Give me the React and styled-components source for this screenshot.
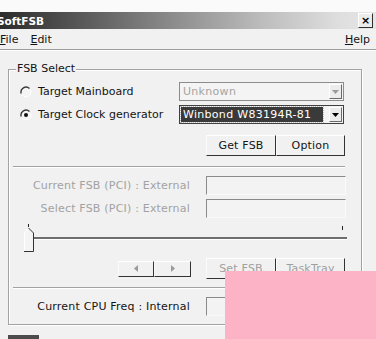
import React from "react";
import styled, { createGlobalStyle } from "styled-components";

const Global = createGlobalStyle`
  html, body { margin: 0; padding: 0; background: #f1f1f1; }
  body { font-family: "DejaVu Sans", Verdana, sans-serif; }
`;

const Page = styled.div`
  position: relative;
  width: 376px;
  height: 339px;
  overflow: hidden;
  background: #f1f1f1;
  font-family: "DejaVu Sans", Verdana, sans-serif;
  font-size: 11px;
  color: #141414;
`;

const TopGap = styled.div`
  height: 12px;
  background: #fafafa;
`;

const TitleBar = styled.div`
  height: 17px;
  display: flex;
  align-items: center;
  justify-content: space-between;
  background: linear-gradient(to right, #2c2c2c 0%, #555 20%, #8a8a8a 45%, #bdbdbd 70%, #dedede 90%, #e6e6e6 100%);
`;

const Title = styled.span`
  margin-left: -3px;
  font-weight: bold;
  font-size: 10.5px;
  color: #fff;
`;

const CloseBtn = styled.div`
  width: 13px;
  height: 13px;
  margin-right: 3px;
  display: flex;
  align-items: center;
  justify-content: center;
  background: #ececec;
  border-top: 1px solid #fff;
  border-left: 1px solid #fff;
  border-right: 1px solid #303030;
  border-bottom: 1px solid #303030;
  font-weight: bold;
  font-size: 11px;
  line-height: 1;
  color: #000;
`;

const MenuBar = styled.div`
  height: 19px;
  display: flex;
  align-items: center;
  padding: 1px 6px 0 0;
  border-bottom: 1px solid #9e9e9e;
  box-shadow: 0 1px 0 #fff;
`;

const MenuItem = styled.span`
  margin-left: ${(p) => p.$ml || 0}px;
  u { text-decoration: underline; text-underline-offset: 1px; }
`;

const Spacer = styled.div`
  flex: 1;
`;

const Body = styled.div`
  padding: 19px 0 0 8px;
`;

const Group = styled.div`
  position: relative;
  box-sizing: content-box;
  width: 334px;
  height: 254px;
  padding: 0 14px 0 4px;
  border: 1px solid #a2a2a2;
  box-shadow: inset 1px 1px 0 #fff, 1px 1px 0 #fff;
`;

const Legend = styled.span`
  position: absolute;
  top: -8px;
  left: 7px;
  padding: 0 1px;
  background: #f1f1f1;
  font-size: 11px;
`;

const Row = styled.div`
  display: flex;
  align-items: center;
  height: ${(p) => p.$h}px;
  margin-top: ${(p) => p.$mt}px;
`;

const RadioWrap = styled.span`
  display: flex;
  margin-left: 7px;
  width: 12px;
  height: 12px;
`;

const RadioLabel = styled.span`
  margin-left: 6px;
  flex: 1;
`;

const Combo = styled.div`
  width: 161px;
  height: 17px;
  margin-right: 3px;
  display: flex;
  align-items: center;
  border: 1px solid ${(p) => (p.$active ? "#404040" : "#8c8c8c")};
  background: #f4f4f4;
  padding: 0 1px;
`;

const ComboText = styled.span`
  flex: 1;
  height: 15px;
  display: flex;
  align-items: center;
  padding-left: 2px;
  margin-right: 6px;
  background: ${(p) => (p.$active ? "#3a3a3a" : "transparent")};
  outline: ${(p) => (p.$active ? "1px dotted #bbb" : "none")};
  color: ${(p) => (p.$active ? "#fff" : "#a4a4a4")};
  letter-spacing: 0.3px;
`;

const ComboArrow = styled.span`
  width: 11px;
  height: 13px;
  display: flex;
  align-items: center;
  justify-content: center;
  background: #ececec;
  border-top: 1px solid #fff;
  border-left: 1px solid #fff;
  border-right: 1px solid #6a6a6a;
  border-bottom: 1px solid #6a6a6a;
`;

const ButtonGroup = styled.div`
  display: flex;
  margin-left: ${(p) => p.$ml || 0}px;
  margin-right: ${(p) => p.$mr || 0}px;
`;

const Button = styled.div`
  width: ${(p) => p.$w}px;
  height: ${(p) => p.$h || 19}px;
  display: flex;
  align-items: center;
  justify-content: center;
  background: #f1f1f1;
  border-top: 1px solid #fff;
  border-left: 1px solid #fafafa;
  border-right: 1px solid #333;
  border-bottom: 1px solid #333;
  color: ${(p) => (p.$disabled ? "#a0a0a0" : "#141414")};
  letter-spacing: 0.2px;
`;

const Separator = styled.div`
  margin-top: ${(p) => p.$mt}px;
  margin-right: 2px;
  height: 1px;
  background: #a2a2a2;
  box-shadow: 0 1px 0 #fff;
`;

const FieldLabel = styled.span`
  width: 177px;
  text-align: right;
  color: ${(p) => (p.$disabled ? "#a2a2a2" : "#141414")};
  letter-spacing: 0.2px;
`;

const Field = styled.div`
  width: 138px;
  height: 17px;
  margin-left: 16px;
  border-top: 1px solid #8a8a8a;
  border-left: 1px solid #8a8a8a;
  border-right: 1px solid #fafafa;
  border-bottom: 1px solid #fafafa;
  background: #f3f3f3;
`;

const SliderRow = styled.div`
  position: relative;
  height: 27px;
  margin-top: 7px;
  display: flex;
  align-items: center;
`;

const Track = styled.div`
  margin-left: 20px;
  width: 314px;
  height: 2px;
  background: #6e6e6e;
  box-shadow: 0 1px 0 #fff;
`;

const Thumb = styled.svg`
  position: absolute;
  left: 10px;
  top: 0;
`;

const Tick = styled.div`
  position: absolute;
  right: 4px;
  top: 2px;
  width: 1px;
  height: 4px;
  background: #222;
`;

const Pink = styled.div`
  position: absolute;
  left: 225px;
  top: 271px;
  width: 151px;
  height: 68px;
  background: #fdb3c6;
`;

const Status = styled.div`
  margin-top: 10px;
  width: 31px;
  height: 6px;
  background: #4c4c4c;
`;

const Radio = ({ checked }) => (
  <RadioWrap>
    <svg width="12" height="12" viewBox="0 0 12 12">
      <circle cx="6" cy="6" r="5" fill="#f4f4f4" />
      <path d="M9.5 2.5 A5 5 0 0 0 1.2 7.5" fill="none" stroke="#3a3a3a" strokeWidth="1.4" />
      <path d="M2.5 9.5 A5 5 0 0 0 10.8 4.5" fill="none" stroke="#fff" strokeWidth="1" />
      {checked && <circle cx="6" cy="6" r="2" fill="#111" />}
    </svg>
  </RadioWrap>
);

const Down = ({ color }) => (
  <svg width="7" height="4" viewBox="0 0 7 4">
    <path d="M0 0 H7 L3.5 4 Z" fill={color} />
  </svg>
);

const Arrow = ({ dir }) => (
  <svg width="4" height="7" viewBox="0 0 4 7">
    {dir === "left" ? (
      <path d="M4 0 V7 L0 3.5 Z" fill="#9a9a9a" />
    ) : (
      <path d="M0 0 V7 L4 3.5 Z" fill="#9a9a9a" />
    )}
  </svg>
);

export default function App() {
  return (
    <>
      <Global />
      <Page>
        <TopGap />
        <TitleBar>
          <Title>SoftFSB</Title>
          <CloseBtn>×</CloseBtn>
        </TitleBar>
        <MenuBar>
          <MenuItem><u>F</u>ile</MenuItem>
          <MenuItem $ml={12}><u>E</u>dit</MenuItem>
          <Spacer />
          <MenuItem><u>H</u>elp</MenuItem>
        </MenuBar>
        <Body>
          <Group>
            <Legend>FSB Select</Legend>
            <Row $h={19} $mt={12}>
              <Radio />
              <RadioLabel>Target Mainboard</RadioLabel>
              <Combo>
                <ComboText>Unknown</ComboText>
                <ComboArrow><Down color="#9a9a9a" /></ComboArrow>
              </Combo>
            </Row>
            <Row $h={19} $mt={4}>
              <Radio checked />
              <RadioLabel>Target Clock generator</RadioLabel>
              <Combo $active>
                <ComboText $active>Winbond W83194R-81</ComboText>
                <ComboArrow><Down color="#000" /></ComboArrow>
              </Combo>
            </Row>
            <Row $h={21} $mt={11}>
              <Spacer />
              <ButtonGroup $mr={2}>
                <Button $w={68}>Get FSB</Button>
                <Button $w={67}>Option</Button>
              </ButtonGroup>
            </Row>
            <Separator $mt={10} />
            <Row $h={18} $mt={9}>
              <FieldLabel $disabled>Current FSB (PCI) : External</FieldLabel>
              <Field />
            </Row>
            <Row $h={18} $mt={5}>
              <FieldLabel $disabled>Select FSB (PCI) : External</FieldLabel>
              <Field />
            </Row>
            <SliderRow>
              <Track />
              <Thumb width="12" height="28" viewBox="0 0 12 28">
                <line x1="5.5" y1="0" x2="5.5" y2="3" stroke="#222" strokeWidth="1" />
                <path d="M1.5 27.5 V8.5 L5.5 4 L10.5 9 V27.5 Z" fill="#f4f4f4" />
                <path d="M1.5 27 V8.5 L5.5 4" fill="none" stroke="#fff" strokeWidth="1" />
                <path d="M5.5 4 L10.5 9 V27.5 H1" fill="none" stroke="#333" strokeWidth="1" />
              </Thumb>
              <Tick />
            </SliderRow>
            <Row $h={21} $mt={7}>
              <ButtonGroup $ml={105}>
                <Button $w={34} $h={14}><Arrow dir="left" /></Button>
                <Button $w={35} $h={14}><Arrow dir="right" /></Button>
              </ButtonGroup>
              <Spacer />
              <ButtonGroup $mr={2}>
                <Button $w={68} $disabled>Set FSB</Button>
                <Button $w={67} $disabled>TaskTray</Button>
              </ButtonGroup>
            </Row>
            <Separator $mt={8} />
            <Row $h={18} $mt={9}>
              <FieldLabel>Current CPU Freq : Internal</FieldLabel>
              <Field />
            </Row>
          </Group>
          <Status />
        </Body>
        <Pink />
      </Page>
    </>
  );
}
